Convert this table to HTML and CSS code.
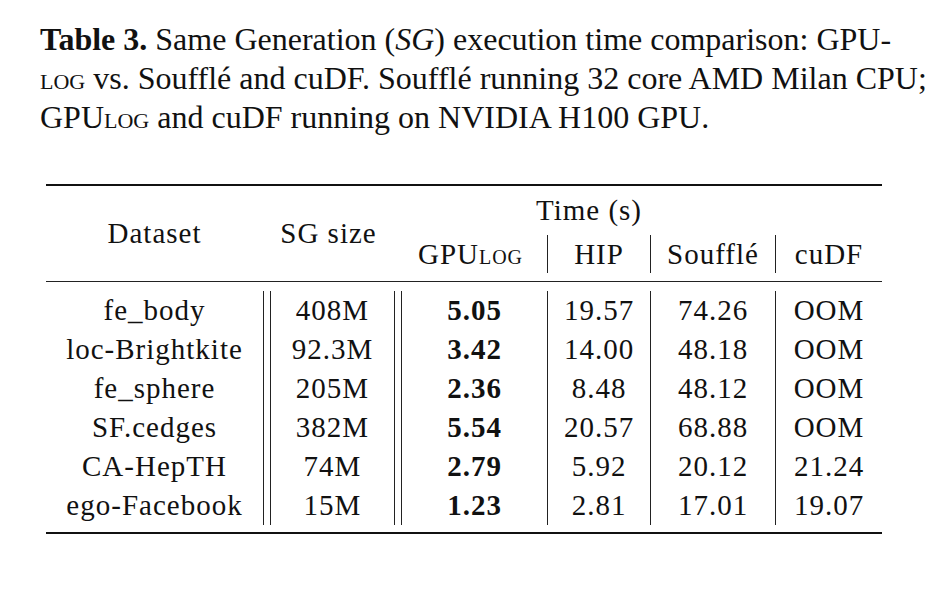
FILE: index.html
```html
<!DOCTYPE html>
<html lang="en">
<head>
<meta charset="utf-8">
<title>Table 3</title>
<link rel="stylesheet" href="styles.css">
</head>
<body>
<figure class="figure">
  <figcaption class="caption"><b class="label">Table 3.</b> Same Generation (<i>SG</i>) execution time comparison: GPU-<br><span class="sc">log</span> vs. Soufflé and cuDF. Soufflé running 32 core AMD Milan CPU;<br>GPU<span class="sc">log</span> and cuDF running on NVIDIA H100 GPU.</figcaption>
  <table class="results">
    <colgroup>
      <col class="c-ds"><col class="c-sg"><col class="c-gpu"><col class="c-hip"><col class="c-souf"><col class="c-cudf">
    </colgroup>
    <thead>
      <tr class="h1">
        <th rowspan="2" class="span2">Dataset</th>
        <th rowspan="2" class="span2">SG size</th>
        <th colspan="4" class="time">Time (s)</th>
      </tr>
      <tr class="h2">
        <th>GPU<span class="sc">log</span></th>
        <th class="vl">HIP</th>
        <th class="vl">Soufflé</th>
        <th class="vl">cuDF</th>
      </tr>
      <tr class="gap gap-a"><td colspan="6"></td></tr>
    </thead>
    <tbody>
      <tr class="gap gap-b"><td colspan="6"></td></tr>
      <tr><td>fe_body</td><td class="dbl">408M</td><td class="dbl best">5.05</td><td class="vl">19.57</td><td class="vl">74.26</td><td class="vl">OOM</td></tr>
      <tr><td>loc-Brightkite</td><td class="dbl">92.3M</td><td class="dbl best">3.42</td><td class="vl">14.00</td><td class="vl">48.18</td><td class="vl">OOM</td></tr>
      <tr><td>fe_sphere</td><td class="dbl">205M</td><td class="dbl best">2.36</td><td class="vl">8.48</td><td class="vl">48.12</td><td class="vl">OOM</td></tr>
      <tr><td>SF.cedges</td><td class="dbl">382M</td><td class="dbl best">5.54</td><td class="vl">20.57</td><td class="vl">68.88</td><td class="vl">OOM</td></tr>
      <tr><td>CA-HepTH</td><td class="dbl">74M</td><td class="dbl best">2.79</td><td class="vl">5.92</td><td class="vl">20.12</td><td class="vl">21.24</td></tr>
      <tr><td>ego-Facebook</td><td class="dbl">15M</td><td class="dbl best">1.23</td><td class="vl">2.81</td><td class="vl">17.01</td><td class="vl">19.07</td></tr>
      <tr class="gap gap-c"><td colspan="6"></td></tr>
    </tbody>
  </table>
</figure>
</body>
</html>
```
FILE: styles.css
```css
html, body {
  margin: 0;
  padding: 0;
  background: #ffffff;
}

body {
  font-family: "Liberation Serif", "Times New Roman", serif;
  color: #111111;
}

.figure {
  margin: 0;
  padding: 20px 0 0 40px;
}

.caption {
  font-size: 32px;
  line-height: 39px;
  margin: 0;
  white-space: nowrap;
}

.caption .label {
  font-weight: bold;
}

.sc {
  font-variant: small-caps;
}

.results {
  margin: 47px 0 0 6px;
  width: 836px;
  table-layout: fixed;
  border-collapse: separate;
  border-spacing: 0;
  border-top: 2px solid #111;
  border-bottom: 2px solid #111;
  font-size: 29px;
  letter-spacing: 1px;
}

.c-ds { width: 217px; }
.c-sg { width: 131px; }
.c-gpu { width: 153px; }
.c-hip { width: 103px; }
.c-souf { width: 125px; }
.c-cudf { width: 107px; }

.results th,
.results td {
  padding: 0;
  font-weight: normal;
  text-align: center;
  line-height: 39px;
  white-space: nowrap;
}

.h1 { height: 49px; }

.h1 .span2 {
  vertical-align: bottom;
  padding-bottom: 21px;
  line-height: 38px;
}

.h1 .time {
  vertical-align: top;
  text-align: left;
  padding-left: 142px;
  padding-top: 5px;
  line-height: 38px;
}

.h2 th {
  height: 38px;
  line-height: 38px;
  vertical-align: top;
}

.results .vl {
  border-left: 1px solid #222;
}

.results .dbl {
  padding-left: 8px;
  background: linear-gradient(to right, #222 0, #222 1px, transparent 1px, transparent 7px, #222 7px, #222 8px, transparent 8px) left top / 8px 100% no-repeat;
}

.results .best {
  font-weight: bold;
}

.gap td {
  padding: 0;
  line-height: 0;
  font-size: 0;
}

.gap-a td {
  height: 8px;
  border-bottom: 1px solid #222;
}

.gap-b td { height: 9px; }
.gap-c td { height: 7px; }
```
